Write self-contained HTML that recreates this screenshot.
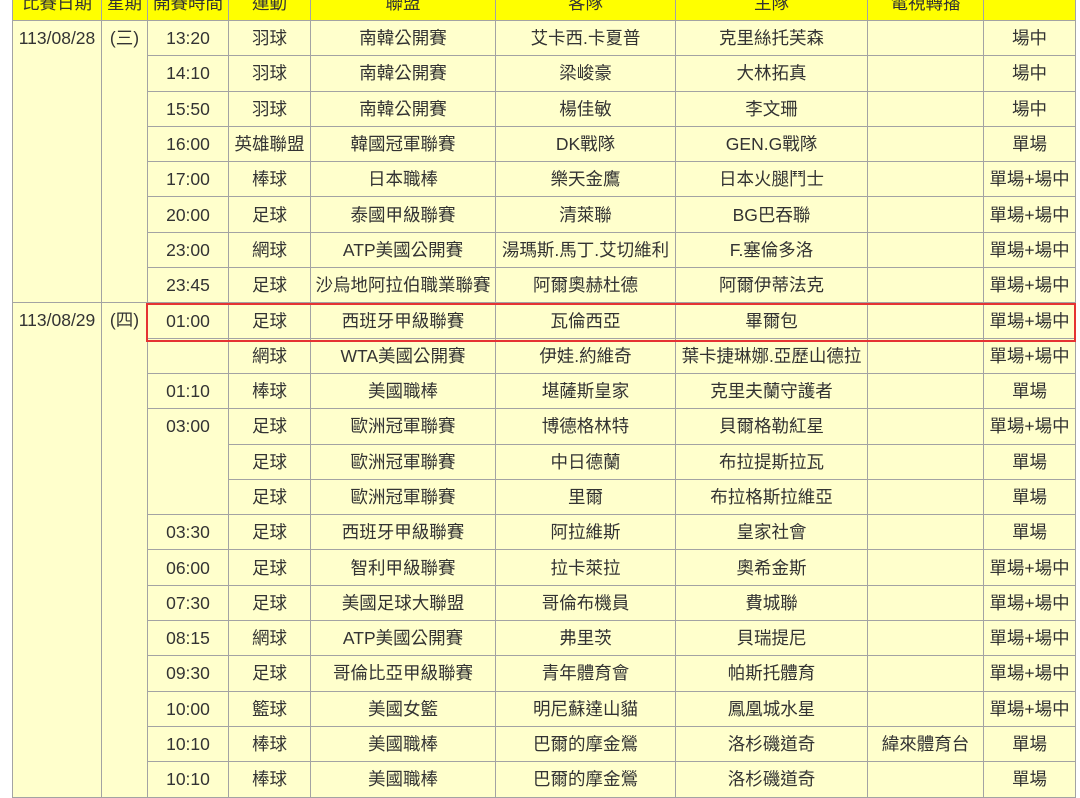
<!DOCTYPE html>
<html><head><meta charset="utf-8"><style>
html,body{margin:0;padding:0;background:#fff;width:1080px;height:749px;overflow:hidden;}
table{position:absolute;left:12px;top:-16px;border-collapse:collapse;table-layout:fixed;width:1063px;
font-family:"Liberation Sans","Noto Sans CJK TC",sans-serif;font-size:17.5px;color:#333;}
td,th{border:1px solid #a3a3a3;text-align:center;padding:0;white-space:nowrap;overflow:hidden;background:#ffffcc;line-height:20px;vertical-align:middle;}
th{background:#ffff00;font-weight:normal;height:35px;}
tr{height:35.3px;}
td.top{vertical-align:top;padding-top:7px;}
.hl{position:absolute;left:146px;top:303px;width:926px;height:35px;border:2px solid #e53333;box-sizing:content-box;}
</style></head><body>
<table>
<colgroup><col style="width:89px"><col style="width:46px"><col style="width:81px"><col style="width:82px"><col style="width:185px"><col style="width:180px"><col style="width:192px"><col style="width:116px"><col style="width:92px"></colgroup>
<tr><th>比賽日期</th><th>星期</th><th>開賽時間</th><th>運動</th><th>聯盟</th><th>客隊</th><th>主隊</th><th>電視轉播</th><th></th></tr>
<tr><td rowspan="8" class="top">113/08/28</td><td rowspan="8" class="top">(三)</td><td>13:20</td><td>羽球</td><td>南韓公開賽</td><td>艾卡西.卡夏普</td><td>克里絲托芙森</td><td></td><td>場中</td></tr>
<tr><td>14:10</td><td>羽球</td><td>南韓公開賽</td><td>梁峻豪</td><td>大林拓真</td><td></td><td>場中</td></tr>
<tr><td>15:50</td><td>羽球</td><td>南韓公開賽</td><td>楊佳敏</td><td>李文珊</td><td></td><td>場中</td></tr>
<tr><td>16:00</td><td>英雄聯盟</td><td>韓國冠軍聯賽</td><td>DK戰隊</td><td>GEN.G戰隊</td><td></td><td>單場</td></tr>
<tr><td>17:00</td><td>棒球</td><td>日本職棒</td><td>樂天金鷹</td><td>日本火腿鬥士</td><td></td><td>單場+場中</td></tr>
<tr><td>20:00</td><td>足球</td><td>泰國甲級聯賽</td><td>清萊聯</td><td>BG巴吞聯</td><td></td><td>單場+場中</td></tr>
<tr><td>23:00</td><td>網球</td><td>ATP美國公開賽</td><td>湯瑪斯.馬丁.艾切維利</td><td>F.塞倫多洛</td><td></td><td>單場+場中</td></tr>
<tr><td>23:45</td><td>足球</td><td>沙烏地阿拉伯職業聯賽</td><td>阿爾奧赫杜德</td><td>阿爾伊蒂法克</td><td></td><td>單場+場中</td></tr>
<tr><td rowspan="14" class="top">113/08/29</td><td rowspan="14" class="top">(四)</td><td>01:00</td><td>足球</td><td>西班牙甲級聯賽</td><td>瓦倫西亞</td><td>畢爾包</td><td></td><td>單場+場中</td></tr>
<tr><td></td><td>網球</td><td>WTA美國公開賽</td><td>伊娃.約維奇</td><td>葉卡捷琳娜.亞歷山德拉</td><td></td><td>單場+場中</td></tr>
<tr><td>01:10</td><td>棒球</td><td>美國職棒</td><td>堪薩斯皇家</td><td>克里夫蘭守護者</td><td></td><td>單場</td></tr>
<tr><td rowspan="3" class="top">03:00</td><td>足球</td><td>歐洲冠軍聯賽</td><td>博德格林特</td><td>貝爾格勒紅星</td><td></td><td>單場+場中</td></tr>
<tr><td>足球</td><td>歐洲冠軍聯賽</td><td>中日德蘭</td><td>布拉提斯拉瓦</td><td></td><td>單場</td></tr>
<tr><td>足球</td><td>歐洲冠軍聯賽</td><td>里爾</td><td>布拉格斯拉維亞</td><td></td><td>單場</td></tr>
<tr><td>03:30</td><td>足球</td><td>西班牙甲級聯賽</td><td>阿拉維斯</td><td>皇家社會</td><td></td><td>單場</td></tr>
<tr><td>06:00</td><td>足球</td><td>智利甲級聯賽</td><td>拉卡萊拉</td><td>奧希金斯</td><td></td><td>單場+場中</td></tr>
<tr><td>07:30</td><td>足球</td><td>美國足球大聯盟</td><td>哥倫布機員</td><td>費城聯</td><td></td><td>單場+場中</td></tr>
<tr><td>08:15</td><td>網球</td><td>ATP美國公開賽</td><td>弗里茨</td><td>貝瑞提尼</td><td></td><td>單場+場中</td></tr>
<tr><td>09:30</td><td>足球</td><td>哥倫比亞甲級聯賽</td><td>青年體育會</td><td>帕斯托體育</td><td></td><td>單場+場中</td></tr>
<tr><td>10:00</td><td>籃球</td><td>美國女籃</td><td>明尼蘇達山貓</td><td>鳳凰城水星</td><td></td><td>單場+場中</td></tr>
<tr><td>10:10</td><td>棒球</td><td>美國職棒</td><td>巴爾的摩金鶯</td><td>洛杉磯道奇</td><td>緯來體育台</td><td>單場</td></tr>
<tr><td>10:10</td><td>棒球</td><td>美國職棒</td><td>巴爾的摩金鶯</td><td>洛杉磯道奇</td><td></td><td>單場</td></tr>
</table>
<div class="hl"></div>
</body></html>
